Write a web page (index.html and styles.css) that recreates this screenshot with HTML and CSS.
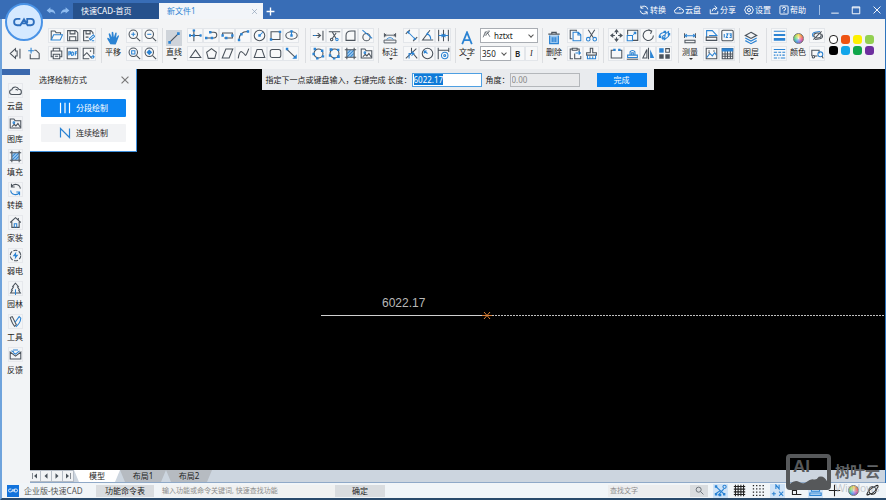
FILE: index.html
```
<!DOCTYPE html>
<html lang="zh-CN">

<head>
    <meta charset="UTF-8">
    <meta name="viewport" content="width=device-width, initial-scale=1.0">
    <title>快速CAD</title>
    <link rel="stylesheet" href="styles.css">
</head>

<body>
    <!-- icon set, .b = accent stroke, .bf = blue fill, .df = dark fill -->
    <svg class="sprite" aria-hidden="true">
        <symbol id="i-cad" viewBox="0 0 24 10"><path class="logo" d="M8 1.500H4.500Q1.200 1.500 1.200 5T4.500 8.500H8L12 2L16 8.500H19.500Q22.800 8.500 22.800 5T19.500 1.500H15.500V6M9.500 6.500H14"/></symbol>
        <symbol id="i-undo" viewBox="0 0 16 16"><path class="wf" d="M1 7L7 2V5Q14 5 15 13Q12 9 7 9.500V12Z"/></symbol>
        <symbol id="i-redo" viewBox="0 0 16 16"><path class="wf" d="M15 7L9 2V5Q2 5 1 13Q4 9 9 9.500V12Z"/></symbol>
        <symbol id="i-sync" viewBox="0 0 16 16"><path d="M14 7A6 6 0 0 0 3 4.500M3 1V5H7"/><path class="b" d="M2 9A6 6 0 0 0 13 11.500M13 15V11H9"/></symbol>
        <symbol id="i-cloud" viewBox="0 0 16 16"><path d="M4 13A3 3 0 0 1 3.500 7A4.500 4.500 0 0 1 12 6.500A3.200 3.200 0 0 1 12 13Z"/><path d="M8 7Q10 6 10.500 8"/></symbol>
        <symbol id="i-share" viewBox="0 0 16 16"><path d="M2 7V14H14V10M5 10Q5 5 11 5M9 1.500L13 5L9 8.500"/></symbol>
        <symbol id="i-gear" viewBox="0 0 16 16"><path d="M8 1L10 2.500H12.500L13.500 5L15 8L13.500 11L12.500 13.500H10L8 15L6 13.500H3.500L2.500 11L1 8L2.500 5L3.500 2.500H6Z"/><circle cx="8" cy="8" r="2.500"/></symbol>
        <symbol id="i-help" viewBox="0 0 16 16"><rect x="1.500" y="1.500" width="13" height="13" rx="1"/><path d="M5.500 6A2.500 2.500 0 1 1 8 8.500V10M8 11.500V13"/></symbol>
        <symbol id="i-min" viewBox="0 0 16 16"><path d="M2 13H14"/></symbol>
        <symbol id="i-max" viewBox="0 0 16 16"><path d="M2 3H14V14H2ZM2 4.500H14"/></symbol>
        <symbol id="i-x" viewBox="0 0 16 16"><path d="M2.500 2.500L13.500 13.500M13.500 2.500L2.500 13.500"/></symbol>
        <symbol id="i-plus" viewBox="0 0 16 16"><path d="M8 1V15M1 8H15"/></symbol>

        <symbol id="i-back" viewBox="0 0 16 16"><path d="M8 2L1.500 8L8 14V11H10V5H8ZM13.500 2V14"/></symbol>
        <symbol id="i-newfile" viewBox="0 0 16 16"><path d="M9 4H11L15 8V14.500H4V9"/><path class="b" d="M5 1V8M1.500 4.500H8.500"/></symbol>
        <symbol id="i-open" viewBox="0 0 16 16"><path d="M1.500 13.500V2.500H6L7.500 4.500H13V7"/><path class="b" d="M1.500 13.500L4.500 7H15.500L12.500 13.500Z"/></symbol>
        <symbol id="i-save" viewBox="0 0 16 16"><path d="M2 2H12L14.500 4.500V14.500H2ZM5 2V6H11V2M4.500 14V9.500H12V14"/></symbol>
        <symbol id="i-saveas" viewBox="0 0 16 16"><path d="M9 14.500H2V2H11L13.500 4.500V6M5 2V6H10V2M4.500 10H8"/><path class="b" d="M9 12L14 7L15.500 9L10.500 13.500ZM12 14.500H15"/></symbol>
        <symbol id="i-print" viewBox="0 0 16 16"><path d="M4 5V1.500H12V5M4 12H1.500V5H14.500V12H12M4 9H12V14.500H4ZM6 11.500H10"/></symbol>
        <symbol id="i-pdf" viewBox="0 0 16 16"><rect x="1.500" y="1.500" width="13" height="13"/><path class="b" d="M3.500 10.500V6H5.500V8.500H3.500M7 6V10.500Q9.500 10.500 9.500 8.200T7 6M11.500 10.500V6H13.500M11.500 8H13"/></symbol>
        <symbol id="i-image" viewBox="0 0 16 16"><path d="M9 14.500H1.500V1.500H14.500V9M2 11L6 7L12 14"/><circle class="df" cx="10.500" cy="5" r="1"/><path class="b" d="M10 12H15M13 10L15 12L13 14.500"/></symbol>
        <symbol id="i-hand" viewBox="0 0 16 16"><path class="bf" d="M5 15L1.500 9Q1 7 3 8L4.500 9.500L3 3.500Q3.500 2 4.700 3.200L6.500 7L6.500 1.500Q7.500 0 8.300 1.500L9 7L10.700 2Q12 1 12.200 2.500L11.500 8L13.700 5Q15 4.500 14.800 6L12 13L11 15.500Z"/></symbol>
        <symbol id="i-zoomin" viewBox="0 0 16 16"><circle cx="6.500" cy="6.500" r="5.200"/><path d="M10.500 10.500L15 15"/><path class="b" d="M4 6.500H9M6.500 4V9"/></symbol>
        <symbol id="i-zoomout" viewBox="0 0 16 16"><circle cx="6.500" cy="6.500" r="5.200"/><path d="M10.500 10.500L15 15"/><path class="b" d="M4 6.500H9"/></symbol>
        <symbol id="i-zoomwin" viewBox="0 0 16 16"><circle cx="6.500" cy="6.500" r="5.200"/><path d="M10.500 10.500L15 15"/><path class="b" d="M4.500 4.500H8.500V8.500H4.500Z"/></symbol>
        <symbol id="i-zoomall" viewBox="0 0 16 16"><circle cx="6.500" cy="6.500" r="5.200"/><path d="M10.500 10.500L15 15"/><path class="bf" d="M6.500 3L10 6.500L6.500 10L3 6.500Z"/></symbol>

        <symbol id="i-line" viewBox="0 0 16 16"><path d="M3.500 12.500L12.500 3.500"/><path class="bf" d="M1.500 11.500H4.500V14.500H1.500ZM11.500 1.500H14.500V4.500H11.500Z"/></symbol>
        <symbol id="i-axis" viewBox="0 0 16 16"><path d="M6 1V15M1 8H15"/><path class="bf" d="M4.500 6.500H7.500V9.500H4.500ZM0 6.500H2.500V9.500H0ZM13 6.500H15.500V9.500H13ZM4.500 0.500H7.500V3H4.500Z"/></symbol>
        <symbol id="i-polyline" viewBox="0 0 16 16"><path d="M2 11H8M6 4H11A3.500 3.500 0 0 1 11 11H9"/><path class="bf" d="M0 9.500H3V12.500H0ZM7 9.500H10V12.500H7ZM5 2.500H8V5.500H5Z"/></symbol>
        <symbol id="i-slot" viewBox="0 0 16 16"><path d="M2 8V5H14V11H4"/><path class="bf" d="M0.500 6.500H3.500V9.500H0.500ZM12.500 6.500H15.500V9.500H12.500ZM5 9.500H8V12.500H5Z"/></symbol>
        <symbol id="i-arc" viewBox="0 0 16 16"><path d="M2.500 13Q3 3 13 3"/><path class="bf" d="M1 12H4V15H1ZM4 5H7V8H4ZM12 1.500H15V4.500H12Z"/></symbol>
        <symbol id="i-circle" viewBox="0 0 16 16"><circle cx="8" cy="8" r="6.500"/><path class="b" d="M8 8L12 4"/><path class="bf" d="M6.500 6.500H9.500V9.500H6.500Z"/></symbol>
        <symbol id="i-rect" viewBox="0 0 16 16"><path d="M2.500 3.500H13.500V13H2.500Z"/><path class="bf" d="M1 11.500H4V14.500H1ZM12 2H15V5H12Z"/></symbol>
        <symbol id="i-ellipse" viewBox="0 0 16 16"><ellipse cx="8" cy="8" rx="7" ry="4.500"/><path class="b" d="M8 8V2"/><path class="bf" d="M6.500 6.500H9.500V9.500H6.500ZM6.500 1.500H9.500V4H6.500Z"/></symbol>
        <symbol id="i-tri" viewBox="0 0 16 16"><path d="M8 3.500L14.500 13H1.500Z"/></symbol>
        <symbol id="i-penta" viewBox="0 0 16 16"><path d="M8 2L14 6.500L12 14H4L2 6.500Z"/></symbol>
        <symbol id="i-para" viewBox="0 0 16 16"><path d="M6 2.500H14.500L10 13.500H1.500Z"/></symbol>
        <symbol id="i-spline" viewBox="0 0 16 16"><path d="M1.500 14Q3 4 6 6T10 10T14.500 2"/></symbol>
        <symbol id="i-trap" viewBox="0 0 16 16"><path d="M5 3H11L14.500 13H1.500Z"/></symbol>
        <symbol id="i-rrect" viewBox="0 0 16 16"><rect x="1.500" y="3" width="13" height="10" rx="2.500"/></symbol>
        <symbol id="i-ray" viewBox="0 0 16 16"><path d="M2 2.500L13 13"/><path class="bf" d="M14.500 14.500V9L9 14.500ZM1 1H4V4H1Z"/></symbol>

        <symbol id="i-extend" viewBox="0 0 16 16"><path d="M1 8H10M7 5L10.500 8L7 11M13.500 2V14"/><path class="b" d="M2 8H5"/></symbol>
        <symbol id="i-trim" viewBox="0 0 16 16"><path d="M1 3.500H15M5 3L10 12M10 5L5 12"/><circle cx="4.500" cy="13" r="1.500"/><circle class="b" cx="11" cy="13" r="1.500"/></symbol>
        <symbol id="i-fillet" viewBox="0 0 16 16"><path d="M2.500 14V8Q2.500 2.500 9 2.500H13.500V14Z"/></symbol>
        <symbol id="i-tangent" viewBox="0 0 16 16"><circle cx="8" cy="10" r="4.500"/><path class="b" d="M3 1.500L15 11.500"/></symbol>
        <symbol id="i-node" viewBox="0 0 16 16"><circle cx="8" cy="8" r="5.500"/><path class="bf" d="M2 1H5V4H2ZM11 3H14V6H11ZM0.500 7H3.500V10H0.500ZM12 10H15V13H12ZM5 12.500H8V15.500H5Z"/></symbol>
        <symbol id="i-break" viewBox="0 0 16 16"><circle cx="8" cy="8" r="5.500"/><path class="bf" d="M2 1.500H5.500V5H2ZM11 2H14V5H11ZM1 9H4V12H1ZM11 10H14.500V13.500H11ZM6 13H9V15.500H6Z"/></symbol>
        <symbol id="i-hatch" viewBox="0 0 16 16"><path class="bl" d="M3.500 3.500H12.500V12.500H3.500Z"/><path class="b" d="M4 8L8 4M4 12L12 4M8 12L12 8"/><path d="M1 3.500H15M1 12.500H15M3.500 1V15M12.500 1V15"/></symbol>
        <symbol id="i-gallery" viewBox="0 0 16 16"><path d="M1.500 13.500V2.500H6L7.500 4.500H14.500V13.500ZM3.500 12L6.500 9L8.500 11L11 8L13.500 12"/><circle class="b" cx="6" cy="7" r="1"/></symbol>

        <symbol id="i-mark" viewBox="0 0 20 16"><path d="M2 1V7M18 1V7M2 4H18M4.500 2.500L2 4L4.500 5.500M15.500 2.500L18 4L15.500 5.500M1.500 11H18.500V15H1.500Z"/><path class="b" d="M5 10Q10 5 15 10"/></symbol>
        <symbol id="i-aligned" viewBox="0 0 16 16"><path class="b" d="M4 4L12 12"/><path d="M6 1L1 6M15 10L10 15"/><path class="bf" d="M2 3L6 2.500L4.500 6ZM14 13L10 13.500L12 10Z"/></symbol>
        <symbol id="i-angle" viewBox="0 0 16 16"><path d="M11 1.500L2 13.500H15"/><path class="b" d="M7 6Q12 7 12 13M9 4L7 6.500L10 7.500"/></symbol>
        <symbol id="i-linear" viewBox="0 0 16 16"><path d="M2 1V15M8 1V15M14 1V15"/><path class="b" d="M2 8H14M5.500 6L8 8L5.500 10M10.500 6L8 8L10.500 10"/></symbol>
        <symbol id="i-coord" viewBox="0 0 16 16"><path d="M1 14L14 2M8 1V8M10 8L15 14"/><path class="b" d="M5 14V8H11M8 5.500L11 8L8 10.500"/></symbol>
        <symbol id="i-radius" viewBox="0 0 16 16"><circle cx="8" cy="8" r="6.500"/><path class="b" d="M8 8L4 5M4 8V5H7"/></symbol>
        <symbol id="i-dimset" viewBox="0 0 16 16"><path d="M1.500 1V15M14.500 1V6M2 4H14"/><circle class="b" cx="9.500" cy="10.500" r="4"/><circle class="b" cx="9.500" cy="10.500" r="1.200"/></symbol>
        <symbol id="i-text" viewBox="0 0 16 16"><path class="b thick" d="M2.500 15L8 1.500L13.500 15M4.500 10.500H11.500"/></symbol>
        <symbol id="i-font" viewBox="0 0 16 16"><path d="M2 13L6 3L8 8M4 9H8M8 2L14 12M8 8L13 3M10 2H14"/></symbol>
        <symbol id="i-trash" viewBox="0 0 16 16"><path d="M1.500 3.500H14.500M5.500 3.500V1.500H10.500V3.500"/><path class="bl" d="M3 5H13V14.500H3Z"/><path class="b" d="M3 5V14.500H13V5M6 7V12.500M8 7V12.500M10 7V12.500"/></symbol>
        <symbol id="i-copy" viewBox="0 0 16 16"><path d="M4 12H1.500V1.500H9V3"/><path class="b" d="M5 4H11.500L14.500 7V14.500H5ZM11 4V7.500H14.500"/></symbol>
        <symbol id="i-cut" viewBox="0 0 16 16"><path d="M4 1L10.500 11M12 1L5.500 11"/><circle class="b" cx="4" cy="12.500" r="2.200"/><circle class="b" cx="12" cy="12.500" r="2.200"/></symbol>
        <symbol id="i-paste" viewBox="0 0 16 16"><path d="M5 14.500H1.500V2.500H4M10 2.500H12.500V6M4 1.500H10V4H4ZM7 8V14.500H14.500V11"/><path class="b" d="M8 7.500H14M12 5.500L14 7.500L12 9.500"/></symbol>
        <symbol id="i-brush" viewBox="0 0 16 16"><path d="M6.500 7V1.500H9.500V7H14V10H2V7Z"/><path class="b" d="M3 10V14.500H13V10M6 14V11.500M9.500 14V11.500"/></symbol>

        <symbol id="i-move" viewBox="0 0 16 16"><path d="M8 2V6M8 10V14M2 8H6M10 8H14"/><path class="df" d="M8 0L11 4H5ZM8 16L11 12H5ZM0 8L4 5V11ZM16 8L12 5V11Z"/></symbol>
        <symbol id="i-scale" viewBox="0 0 16 16"><path d="M2 7V1.500H14.500V14H8"/><path class="b" d="M1.500 8H8V14.500H1.500ZM9 7L12 4M9.500 4H12V6.500"/></symbol>
        <symbol id="i-rotate" viewBox="0 0 16 16"><path d="M11 2.500A6.300 6.300 0 1 0 14 8M8 1L12 2.500L10.500 6"/></symbol>
        <symbol id="i-offset" viewBox="0 0 16 16"><path class="b" d="M1.500 10Q2 5 6 4.500L9 3M5 12Q5 8 9 7M8 13L13 9V3L9 6Z"/><path class="bf" d="M1 8H4V11H1ZM7 2H10V5H7ZM12 5H15V8H12ZM5 10H8V13H5Z"/></symbol>
        <symbol id="i-stretch" viewBox="0 0 16 16"><path d="M5 4H1.500V13.500H14.500V4H11"/><path class="bf" d="M4 2H7V5H4ZM10 2H13V5H10Z"/></symbol>
        <symbol id="i-stamp" viewBox="0 0 16 16"><path class="b" d="M5 10V6A3.500 3.500 0 0 1 11 6V10M2 10H14V13H2ZM7 10V7H9V10"/><path d="M1 15H15"/></symbol>
        <symbol id="i-mirror" viewBox="0 0 16 16"><path d="M6 3V13.500H1ZM8 1V15"/><path class="bf" d="M10 3V13.500H15Z"/></symbol>
        <symbol id="i-array" viewBox="0 0 16 16"><path d="M9.500 2H14V6.500H9.500Z"/><path class="bf" d="M1.500 1.500H7V7H1.500Z"/><path class="df" d="M1.500 9H7V14.500H1.500ZM9 9H14.500V14.500H9Z"/></symbol>
        <symbol id="i-measure" viewBox="0 0 18 16"><path d="M2 2V8M16 2V8M2.500 11H15.500V14H2.500Z"/><path class="b" d="M2 5H16M5 3L2.500 5L5 7M13 3L15.500 5L13 7"/></symbol>
        <symbol id="i-area" viewBox="0 0 16 16"><path class="b" d="M2 10V2H9L14.500 8H5"/><path d="M1.500 10H14.500V14H1.500Z"/></symbol>
        <symbol id="i-num" viewBox="0 0 16 16"><rect x="1" y="1.500" width="14" height="13" rx="1.500"/><path class="b" d="M4 6V10.500M6.500 6H8.500L6.500 10.500H8.700M10.500 6H12.500V10.500H10.500M11 8H12.500"/></symbol>
        <symbol id="i-region" viewBox="0 0 16 16"><path d="M1.500 1.500H14.500V14.500H1.500ZM4 5H6M10 5H12"/><path class="b" d="M2 13L6 8L9 11L12 7L14 10"/><circle class="df" cx="5" cy="7" r="1"/></symbol>
        <symbol id="i-table" viewBox="0 0 16 16"><path d="M1.500 2H14.500V14.500H1.500ZM1.500 8.500H14.500M1.500 11.500H14.500M5 5V14.500M8 5V14.500M11.500 5V14.500"/><path class="bf" d="M1 1.500H15V5.500H1Z"/></symbol>
        <symbol id="i-layers" viewBox="0 0 16 16"><path d="M8 1.500L14.500 5L8 8.500L1.500 5Z"/><path class="b" d="M1.500 8L8 11.500L14.500 8M1.500 11L8 14.500L14.500 11"/></symbol>
        <symbol id="i-weight" viewBox="0 0 16 16"><path class="bf" d="M1 2H15V3.500H1ZM1 6H15V8.500H1ZM1 11H15V14.500H1Z"/></symbol>
        <symbol id="i-dash" viewBox="0 0 16 16"><path class="b" d="M1 3H15M1 6.500H5M6.500 6.500H10M11.500 6.500H15M1 10H3M4.500 10H6.500M8 10H10M11.500 10H14.500M1 13.500H5M6.500 13.500H8M9.500 13.500H15"/></symbol>
        <symbol id="i-link" viewBox="0 0 16 16"><path class="b" d="M3 10Q0 5 5 4L11 3"/><path d="M13 6Q16 11 11 12L5 13M3 13L13 3"/><ellipse cx="8" cy="8" rx="4.500" ry="3"/></symbol>
        <symbol id="i-match" viewBox="0 0 16 16"><path d="M1 11V4H10V8M4 11H8"/><circle class="b" cx="11.500" cy="9" r="3"/><path d="M13.500 11L15 14"/><circle cx="3" cy="12" r="1.500"/></symbol>

        <symbol id="i-home" viewBox="0 0 16 16"><path d="M1.500 8L8 2L14.500 8M3.500 7V14H12.500V7M11.500 4.500V2.500"/><path class="b" d="M6.500 14V9.500H9.500V14"/></symbol>
        <symbol id="i-power" viewBox="0 0 16 16"><circle cx="8" cy="8" r="6.500" stroke-dasharray="5 1.800"/><path class="bf" d="M9 3L4.500 9H7.500L7 13L11.500 7H8.500Z"/></symbol>
        <symbol id="i-tree" viewBox="0 0 16 16"><path d="M8 1.500L4.500 5.500L5.500 6L3 10L4 10.500L2 13.500H14L12 10.500L13 10L10.500 6L11.500 5.500Z"/><path class="b" d="M8 9V16"/></symbol>
        <symbol id="i-tools" viewBox="0 0 16 16"><path d="M1.500 3L4 2L9 12L7 14Q4 11 1.500 3Z"/><path class="b" d="M7.500 9L12.500 2L14.500 4Q14 10 8.500 14.500"/></symbol>
        <symbol id="i-mail" viewBox="0 0 16 16"><path d="M1.500 5V13.500H14.500V5L8 10Z"/><path class="b" d="M3 3.500L6 5M5 2.500H11M13 3.500L8 7.500L5 5.500"/></symbol>
        <symbol id="i-bars" viewBox="0 0 16 16"><path d="M2 1V15M8 1V15M14 1V15"/></symbol>
        <symbol id="i-zig" viewBox="0 0 16 16"><path d="M2 14V2L14 14V2"/></symbol>
        <symbol id="i-search" viewBox="0 0 16 16"><circle cx="6.500" cy="6.500" r="4.500"/><path d="M10 10L15 15"/></symbol>
        <symbol id="i-first" viewBox="0 0 16 16"><path d="M3 2V14"/><path class="df" d="M12 3V13L6 8Z"/></symbol>
        <symbol id="i-prev" viewBox="0 0 16 16"><path class="df" d="M11 2.500V13.500L5 8Z"/></symbol>
        <symbol id="i-next" viewBox="0 0 16 16"><path class="df" d="M5 2.500V13.500L11 8Z"/></symbol>
        <symbol id="i-last" viewBox="0 0 16 16"><path d="M13 2V14"/><path class="df" d="M4 3V13L10 8Z"/></symbol>
        <symbol id="i-snap" viewBox="0 0 16 16"><path class="b" d="M2 3L12 12M2 12L8 8M5 14L12 6"/><circle class="b" cx="13" cy="3.500" r="2"/><path class="bf" d="M1 1.500H4V4.500H1ZM1 11H4V14H1ZM6 12H9V15H6ZM11 11H14V14H11Z"/></symbol>
        <symbol id="i-grid" viewBox="0 0 16 16"><path class="k" d="M3 1V15M6.300 1V15M9.700 1V15M13 1V15M1 3H15M1 6.300H15M1 9.700H15M1 13H15"/></symbol>
        <symbol id="i-dots" viewBox="0 0 16 16"><path class="k" stroke-dasharray="1.600 2.400" d="M1 2H15M1 6H15M1 10H15M1 14H15"/></symbol>
        <symbol id="i-osnap" viewBox="0 0 16 16"><path class="b" d="M6 6V1L10 6V1M1 12H6M3.500 9.500V14.500M10 9.500L15 14.500M15 9.500L10 14.500"/></symbol>
        <symbol id="i-ortho" viewBox="0 0 16 16"><path class="k" d="M3 2V13H14M3 8H8V13"/></symbol>
        <symbol id="i-screen" viewBox="0 0 16 16"><path class="b" d="M3 2H13V9H3ZM1 11H15V14H1Z"/></symbol>
        <symbol id="i-orbit" viewBox="0 0 16 16"><circle class="k" cx="8" cy="8" r="4.500"/><path class="k" d="M5 12Q0 15 1.500 11.500Q4 6 11 3Q16 0 14.500 4Q12 9 6 13"/></symbol>
    </svg>

    <header class="titlebar">
        <div class="history">
            <button class="plain" aria-label="撤销"><svg><use href="#i-undo"/></svg></button>
            <button class="plain" aria-label="重做"><svg><use href="#i-redo"/></svg></button>
        </div>
        <div class="file-tab">快速CAD-首页</div>
        <div class="file-tab active">新文件1<button class="plain tab-close" aria-label="关闭"><svg><use href="#i-x"/></svg></button></div>
        <button class="plain add-tab" aria-label="新建"><svg><use href="#i-plus"/></svg></button>
        <div class="title-tools">
            <button class="plain"><svg><use href="#i-sync"/></svg>转换</button>
            <button class="plain"><svg><use href="#i-cloud"/></svg>云盘</button>
            <button class="plain"><svg><use href="#i-share"/></svg>分享</button>
            <button class="plain"><svg><use href="#i-gear"/></svg>设置</button>
            <button class="plain"><svg><use href="#i-help"/></svg>帮助</button>
        </div>
        <div class="window-tools">
            <button class="plain" aria-label="最小化"><svg><use href="#i-min"/></svg></button>
            <button class="plain" aria-label="最大化"><svg><use href="#i-max"/></svg></button>
            <button class="plain" aria-label="关闭窗口"><svg><use href="#i-x"/></svg></button>
        </div>
        <div class="app-logo"><svg><use href="#i-cad"/></svg></div>
    </header>

    <div class="ribbon">
        <div class="quick">
            <button class="plain"><svg><use href="#i-back"/></svg></button>
            <button class="plain"><svg><use href="#i-newfile"/></svg></button>
        </div>
        <div class="group first">
            <div class="cells">
                <button class="cell"><svg><use href="#i-open"/></svg></button>
                <button class="cell"><svg><use href="#i-save"/></svg></button>
                <button class="cell"><svg><use href="#i-saveas"/></svg></button>
                <button class="cell"><svg><use href="#i-print"/></svg></button>
                <button class="cell"><svg><use href="#i-pdf"/></svg></button>
                <button class="cell"><svg><use href="#i-image"/></svg></button>
            </div>
        </div>
        <div class="group">
            <button class="big"><svg><use href="#i-hand"/></svg>平移</button>
            <div class="cells">
                <button class="cell"><svg><use href="#i-zoomin"/></svg></button>
                <button class="cell"><svg><use href="#i-zoomout"/></svg></button>
                <button class="cell"><svg><use href="#i-zoomwin"/></svg></button>
                <button class="cell"><svg><use href="#i-zoomall"/></svg></button>
            </div>
        </div>
        <div class="group wide">
            <button class="big menu on"><svg><use href="#i-line"/></svg>直线</button>
            <div class="cells">
                <button class="cell"><svg><use href="#i-axis"/></svg></button>
                <button class="cell"><svg><use href="#i-polyline"/></svg></button>
                <button class="cell"><svg><use href="#i-slot"/></svg></button>
                <button class="cell"><svg><use href="#i-arc"/></svg></button>
                <button class="cell"><svg><use href="#i-circle"/></svg></button>
                <button class="cell"><svg><use href="#i-rect"/></svg></button>
                <button class="cell"><svg><use href="#i-ellipse"/></svg></button>
                <button class="cell"><svg><use href="#i-tri"/></svg></button>
                <button class="cell"><svg><use href="#i-penta"/></svg></button>
                <button class="cell"><svg><use href="#i-para"/></svg></button>
                <button class="cell"><svg><use href="#i-spline"/></svg></button>
                <button class="cell"><svg><use href="#i-trap"/></svg></button>
                <button class="cell"><svg><use href="#i-rrect"/></svg></button>
                <button class="cell"><svg><use href="#i-ray"/></svg></button>
            </div>
        </div>
        <div class="group indent">
            <div class="cells">
                <button class="cell"><svg><use href="#i-extend"/></svg></button>
                <button class="cell"><svg><use href="#i-trim"/></svg></button>
                <button class="cell"><svg><use href="#i-fillet"/></svg></button>
                <button class="cell"><svg><use href="#i-tangent"/></svg></button>
                <button class="cell"><svg><use href="#i-node"/></svg></button>
                <button class="cell"><svg><use href="#i-break"/></svg></button>
                <button class="cell"><svg><use href="#i-hatch"/></svg></button>
                <button class="cell"><svg><use href="#i-gallery"/></svg></button>
            </div>
        </div>
        <div class="group">
            <button class="big menu"><svg><use href="#i-mark"/></svg>标注</button>
            <div class="cells">
                <button class="cell"><svg><use href="#i-aligned"/></svg></button>
                <button class="cell"><svg><use href="#i-angle"/></svg></button>
                <button class="cell"><svg><use href="#i-linear"/></svg></button>
                <button class="cell"><svg><use href="#i-coord"/></svg></button>
                <button class="cell"><svg><use href="#i-radius"/></svg></button>
                <button class="cell"><svg><use href="#i-dimset"/></svg></button>
            </div>
        </div>
        <div class="group">
            <button class="big menu"><svg><use href="#i-text"/></svg>文字</button>
            <div class="fonts">
                <div class="pick pick-font">
                    <svg><use href="#i-font"/></svg>
                    <select aria-label="字体"><option>hztxt</option></select>
                </div>
                <div class="font-row">
                    <div class="pick pick-size"><select aria-label="字号"><option>350</option></select></div>
                    <button class="cell bold">B</button>
                    <button class="cell italic">I</button>
                </div>
            </div>
        </div>
        <div class="group">
            <button class="big menu"><svg><use href="#i-trash"/></svg>删除</button>
            <div class="cells">
                <button class="cell"><svg><use href="#i-copy"/></svg></button>
                <button class="cell"><svg><use href="#i-cut"/></svg></button>
                <button class="cell"><svg><use href="#i-paste"/></svg></button>
                <button class="cell"><svg><use href="#i-brush"/></svg></button>
            </div>
        </div>
        <div class="group indent wide">
            <div class="cells">
                <button class="cell"><svg><use href="#i-move"/></svg></button>
                <button class="cell"><svg><use href="#i-scale"/></svg></button>
                <button class="cell"><svg><use href="#i-rotate"/></svg></button>
                <button class="cell"><svg><use href="#i-offset"/></svg></button>
                <button class="cell"><svg><use href="#i-stretch"/></svg></button>
                <button class="cell"><svg><use href="#i-stamp"/></svg></button>
                <button class="cell"><svg><use href="#i-mirror"/></svg></button>
                <button class="cell"><svg><use href="#i-array"/></svg></button>
            </div>
        </div>
        <div class="group">
            <button class="big menu"><svg><use href="#i-measure"/></svg>测量</button>
            <div class="cells">
                <button class="cell"><svg><use href="#i-area"/></svg></button>
                <button class="cell"><svg><use href="#i-num"/></svg></button>
                <button class="cell"><svg><use href="#i-region"/></svg></button>
                <button class="cell"><svg><use href="#i-table"/></svg></button>
            </div>
        </div>
        <div class="group">
            <button class="big menu"><svg><use href="#i-layers"/></svg>图层</button>
        </div>
        <div class="group indent last">
            <div class="cells">
                <button class="cell"><svg><use href="#i-weight"/></svg></button>
                <button class="cell"><svg><use href="#i-dash"/></svg></button>
            </div>
            <button class="big"><span class="wheel"></span>颜色</button>
            <div class="cells">
                <button class="cell"><svg><use href="#i-link"/></svg></button>
                <button class="cell"><svg><use href="#i-match"/></svg></button>
            </div>
            <div class="swatches">
                <button class="swatch white" aria-label="白色"></button>
                <button class="swatch orange" aria-label="橙色"></button>
                <button class="swatch yellow" aria-label="黄色"></button>
                <button class="swatch lime" aria-label="浅绿"></button>
                <button class="swatch black" aria-label="黑色"></button>
                <button class="swatch cyan" aria-label="青色"></button>
                <button class="swatch green" aria-label="绿色"></button>
                <button class="swatch purple" aria-label="紫色"></button>
            </div>
        </div>
    </div>

    <div class="main">
        <nav class="sidebar">
            <button class="side"><svg><use href="#i-cloud"/></svg>云盘</button>
            <button class="side"><svg><use href="#i-gallery"/></svg>图库</button>
            <button class="side"><svg><use href="#i-hatch"/></svg>填充</button>
            <button class="side"><svg><use href="#i-sync"/></svg>转换</button>
            <button class="side"><svg><use href="#i-home"/></svg>家装</button>
            <button class="side"><svg><use href="#i-power"/></svg>弱电</button>
            <button class="side"><svg><use href="#i-tree"/></svg>园林</button>
            <button class="side"><svg><use href="#i-tools"/></svg>工具</button>
            <button class="side"><svg><use href="#i-mail"/></svg>反馈</button>
        </nav>

        <div class="work">
            <div class="canvas">
                <svg class="drawing">
                    <text class="dim" x="352" y="238">6022.17</text>
                    <path class="solid" d="M291 246.500H457"/>
                    <line class="dashed" x1="459" y1="246.500" x2="100%" y2="246.500"/>
                    <path class="cross" d="M454 243L460 250M460 243L454 250M452 246.500H462"/>
                </svg>

                <div class="mode">
                    <div class="mode-head">选择绘制方式<button class="plain" aria-label="关闭"><svg><use href="#i-x"/></svg></button></div>
                    <div class="mode-body">
                        <button class="mode-btn primary"><svg><use href="#i-bars"/></svg>分段绘制</button>
                        <button class="mode-btn"><svg><use href="#i-zig"/></svg>连续绘制</button>
                    </div>
                </div>

                <div class="prompt">
                    <span>指定下一点或键盘输入，右键完成</span>
                    <label for="len">长度：</label>
                    <input id="len" type="text" value="6022.17">
                    <label for="ang">角度：</label>
                    <input id="ang" type="text" value="0.00" disabled>
                    <button class="done">完成</button>
                </div>
            </div>

            <div class="sheets">
                <div class="pager">
                    <button><svg><use href="#i-first"/></svg></button>
                    <button><svg><use href="#i-prev"/></svg></button>
                    <button><svg><use href="#i-next"/></svg></button>
                    <button><svg><use href="#i-last"/></svg></button>
                </div>
                <button class="sheet current">模型</button>
                <button class="sheet">布局1</button>
                <button class="sheet">布局2</button>
            </div>
        </div>
    </div>

    <footer class="status">
        <span class="mini-logo"><svg><use href="#i-cad"/></svg></span>
        <span class="edition">企业版-快速CAD</span>
        <button class="gray commands">功能命令表</button>
        <input class="command" type="text" aria-label="命令" placeholder="输入功能或命令关键词, 快速查找功能">
        <button class="gray ok">确定</button>
        <input class="find" type="text" aria-label="查找文字" placeholder="查找文字">
        <button class="gray find-btn" aria-label="查找"><svg><use href="#i-search"/></svg></button>
        <div class="toggles">
            <button class="plain on"><svg><use href="#i-snap"/></svg></button>
            <button class="plain"><svg><use href="#i-grid"/></svg></button>
            <button class="plain"><svg><use href="#i-dots"/></svg></button>
            <button class="plain on"><svg><use href="#i-osnap"/></svg></button>
            <button class="plain"><svg><use href="#i-ortho"/></svg></button>
            <button class="plain on"><svg><use href="#i-screen"/></svg></button>
            <button class="plain dark"><svg><use href="#i-plus"/></svg></button>
            <button class="plain"><span class="wheel"></span></button>
            <button class="plain"><svg><use href="#i-orbit"/></svg></button>
        </div>
    </footer>

    <div class="watermark">
        <div class="wm-box">
            <span>AI</span>
            <svg viewBox="0 0 36 14" preserveAspectRatio="none"><path d="M0 14V9Q5 4 9 7T16 7Q20 3 23 4T28 1Q33 -1 36 6V14Z"/></svg>
        </div>
        <div class="wm-text">
            <div class="wm-name">树叶云</div>
            <div class="wm-win">Windows</div>
        </div>
    </div>

    <script>
        // start with the length selected so it can be typed over
        const len = document.getElementById('len')
        len.focus()
        len.select()
    </script>
</body>

</html>
```
FILE: styles.css
```
* {
    padding: 0;
    margin: 0;
    box-sizing: border-box;
}

body {
    height: 100vh;
    display: flex;
    flex-direction: column;
    overflow: hidden;
    font-family: "Noto Sans", "Noto Sans CJK SC", sans-serif;
    font-size: 8px;
    line-height: 12px;
    color: #222;
    background: #f2f3f4;
}

button,
input,
select {
    font: inherit;
    color: inherit;
    border: 0;
    background: none;
}

button {
    display: flex;
    align-items: center;
    justify-content: center;
    white-space: nowrap;
}

svg {
    display: block;
    flex: none;
    width: 13px;
    height: 13px;
    fill: none;
    stroke: #4b535c;
    stroke-width: 1.3;
}

.sprite {
    position: absolute;
    width: 0;
    height: 0;
}

.b {
    stroke: var(--accent, #2b83d3);
}

.thick {
    stroke-width: 2;
}

.bf {
    fill: #2b83d3;
    stroke: none;
}

.bl {
    fill: #9cc8f0;
    stroke: none;
}

.df {
    fill: #4b535c;
    stroke: none;
}

.wf {
    fill: #8fbcf0;
    stroke: none;
}

.k {
    stroke: #222;
}

.logo {
    stroke-width: 2;
}

/* title bar */
.titlebar {
    --accent: #fff;
    position: relative;
    height: 19px;
    display: flex;
    align-items: flex-end;
    padding-right: 4px;
    background: #386db6;
    color: #fff;
}

.titlebar svg {
    width: 10px;
    height: 10px;
    stroke: #fff;
    stroke-width: 1.5;
}

.history {
    display: flex;
    gap: 4px;
    height: 16px;
    width: 73px;
    padding-left: 46px;
}

.file-tab {
    height: 16px;
    width: 86px;
    padding: 0 5px 0 8px;
    display: flex;
    align-items: center;
    justify-content: space-between;
    background: #26518c;
}

.file-tab.active {
    width: 104px;
    background: #f2f5f9;
    color: #2b83d3;
}

.file-tab .tab-close svg {
    width: 7px;
    height: 7px;
    stroke: #8a9db5;
}

.add-tab {
    width: 14px;
    height: 16px;
}

.titlebar .add-tab svg {
    width: 9px;
    height: 9px;
    stroke-width: 2.4;
}

.title-tools {
    display: flex;
    align-self: center;
    gap: 8px;
    margin-left: auto;
    padding-right: 13px;
}

.title-tools button {
    gap: 1px;
}

.window-tools {
    display: flex;
    align-self: center;
    gap: 11px;
    padding-left: 10px;
    border-left: 1px solid #9dbbe2;
}

.app-logo {
    position: absolute;
    z-index: 2;
    left: 5px;
    top: 3px;
    width: 38px;
    height: 38px;
    border: 2px solid #4a93e6;
    border-radius: 50%;
    background: #d5e9ff;
    display: flex;
    align-items: center;
    justify-content: center;
}

.titlebar .app-logo svg {
    width: 22px;
    height: 10px;
    stroke: #2f6fbd;
}

/* ribbon */
.ribbon {
    height: 50px;
    display: flex;
    padding: 9px 0 6px;
    border-left: 2px solid #6fa3dc;
    border-right: 1px solid #2f75bd;
    background: #f3f4f5;
}

.quick {
    display: flex;
    align-items: flex-start;
    gap: 5px;
    padding: 19px 8px 0 7px;
}

.group {
    display: flex;
    align-items: flex-start;
    gap: 2px;
    padding-right: 4px;
    border-right: 1px solid #dcdee1;
}

.group.first {
    padding-right: 5px;
}

.group.wide {
    padding-right: 6px;
}

.group.indent {
    padding-left: 4px;
}

.group.last {
    gap: 0;
    border: 0;
}

.cells {
    display: grid;
    grid-template-rows: 15px 15px;
    row-gap: 3px;
    grid-template-columns: repeat(3, 16px);
}

/* even two-row blocks */
.cells:has(> :nth-child(2):last-child) {
    grid-template-columns: 16px;
}

.cells:has(> :nth-child(4):last-child) {
    grid-template-columns: repeat(2, 16px);
}

.cells:has(> :nth-child(8):last-child) {
    grid-template-columns: repeat(4, 16px);
}

.cells:has(> :nth-child(14):last-child) {
    grid-template-columns: repeat(7, 16px);
}

.cell {
    border: 1px solid #e3e6ea;
    background: #f7f8f9;
}

.big {
    position: relative;
    flex-direction: column;
    width: 22px;
    height: 31px;
    justify-content: flex-start;
}

.big svg {
    width: 16px;
    height: 16px;
    padding: 1px;
    margin-top: 2px;
}

.big.on svg {
    background: #cfd4da;
}

/* small arrow below the label */
.menu::after {
    content: "";
    position: absolute;
    bottom: -1px;
    left: 10px;
    border: 2px solid transparent;
    border-top-color: #333;
    border-bottom: 0;
}

.wheel {
    flex: none;
    width: 11px;
    height: 11px;
    border: 1px solid #777;
    border-radius: 50%;
    background: radial-gradient(#ffffffb0, #ffffff00 70%), conic-gradient(#f7d850, #f08040, #e84880, #9060d0, #4090e0, #40c890, #a0d850, #f7d850);
}

.big .wheel {
    margin: 5px 0 2px;
}

.fonts {
    width: 58px;
    display: flex;
    flex-direction: column;
    gap: 3px;
}

.font-row {
    display: flex;
}

.pick {
    position: relative;
    height: 15px;
    border: 1px solid #a9adb3;
    background: #fff;
    display: flex;
    align-items: center;
}

.pick::after {
    content: "";
    position: absolute;
    right: 4px;
    top: 4px;
    width: 3px;
    height: 3px;
    border: solid #555;
    border-width: 0 1px 1px 0;
    transform: rotate(45deg);
}

.pick svg {
    width: 9px;
    height: 9px;
    margin: 0 2px 3px 1px;
}

.pick select {
    appearance: none;
    flex: 1;
    min-width: 0;
    outline: 0;
    padding-left: 1px;
}

.pick-size {
    width: 31px;
}

.font-row .cell {
    flex: 1;
}

.bold {
    font-weight: 600;
}

.italic {
    font-family: "Liberation Serif", serif;
    font-style: italic;
}

.swatches {
    display: grid;
    grid-template-columns: repeat(4, 9px);
    gap: 2px 3px;
    padding: 7px 0 0 4px;
}

.swatch {
    height: 9px;
    border-radius: 3px;
}

.white {
    background: #fff;
    border: 1px solid #222;
    border-radius: 4px;
}

.orange { background: #ee5313; }
.yellow { background: #fdf000; }
.lime { background: #92d050; }
.black { background: #000; }
.cyan { background: #12a5ea; }
.green { background: #0fa64a; }
.purple { background: #6d2f9e; }

/* main area */
.main {
    flex: 1;
    min-height: 0;
    display: flex;
    border-left: 2px solid #6fa3dc;
    border-right: 1px solid #2f75bd;
}

.sidebar {
    width: 28px;
    border-top: 6px solid #3b69ae;
    padding-top: 8px;
    display: flex;
    flex-direction: column;
    gap: 4px;
    align-items: center;
    padding-right: 2px;
    background: #f2f4f6;
}

.side {
    flex-direction: column;
    gap: 2px;
    height: 29px;
    flex: none;
}

.side svg {
    border: 1px solid #e6e8ec;
    width: 15px;
    height: 15px;
}

.work {
    flex: 1;
    min-width: 0;
    display: flex;
    flex-direction: column;
}

.canvas {
    position: relative;
    flex: 1;
    background: #000;
}

.drawing {
    width: 100%;
    height: 100%;
    stroke-width: 1;
}

.solid {
    stroke: #d0d0d0;
}

.dashed {
    stroke: #c0c0c0;
    stroke-dasharray: 2 1;
}

.cross {
    stroke: #d98038;
}

.dim {
    font-family: "Liberation Sans", Arial, sans-serif;
    font-size: 12px;
    fill: #b8b8b8;
    stroke: none;
}

.mode {
    position: absolute;
    left: 0;
    top: 0;
    width: 107px;
    border: 1px solid #3f8fdc;
    border-width: 0 1px 1px 0;
    background: #fff;
}

.mode-head {
    height: 21px;
    padding: 0 6px 0 9px;
    display: flex;
    align-items: center;
    justify-content: space-between;
    background: #f0f2f4;
}

.mode-head svg {
    width: 10px;
    height: 10px;
    stroke: #777;
    stroke-width: 1.8;
}

.mode-body {
    padding: 9px 10px 9px 11px;
    display: flex;
    flex-direction: column;
    gap: 7px;
}

.mode-btn {
    height: 18px;
    gap: 5px;
    border-radius: 1px;
    background: #f2f3f5;
}

.mode-btn svg {
    width: 12px;
    height: 12px;
    stroke: #2b83d3;
    stroke-width: 1.6;
}

.mode-btn.primary {
    background: #0a84f2;
    color: #fff;
}

.mode-btn.primary svg {
    stroke: #fff;
}

.prompt {
    position: absolute;
    top: 0;
    left: 50%;
    transform: translateX(-50%);
    height: 21px;
    padding: 0 7px 0 4px;
    display: flex;
    align-items: center;
    white-space: nowrap;
    background: #e9ebee;
}

.prompt label {
    padding-left: 2px;
}

.prompt input {
    width: 70px;
    height: 14px;
    margin-right: 2px;
    padding: 0 1px;
    border: 1px solid #4e9fe2;
    background: #fff;
    outline: 0;
}

.prompt input::selection {
    background: #0f7bd8;
    color: #fff;
}

.prompt input:disabled {
    border-color: #b4b7bb;
    background: #e9eaec;
    color: #888;
}

.done {
    width: 50px;
    height: 14px;
    margin-left: 15px;
    background: #0a84f2;
    color: #fff;
}

.sheets {
    height: 13px;
    display: flex;
    border-bottom: 1px solid #8fa9c8;
    background: #ccd5df;
}

.pager {
    display: flex;
}

.pager button {
    width: 11px;
    border: 1px solid #b5bcc5;
    border-left: 0;
    background: #f1f3f5;
}

.pager svg {
    width: 8px;
    height: 8px;
}

.sheet {
    width: 46px;
    background: #b6bbc1;
    clip-path: polygon(0 0, 100% 0, 41px 100%, 5px 100%);
}

.sheet.current {
    background: #fff;
}

/* status bar */
.status {
    height: 17px;
    display: flex;
    align-items: center;
    padding: 0 6px 0 5px;
    border-left: 2px solid #6fa3dc;
    border-bottom: 2px solid #2a4a6b;
    background: #f1f5f8;
}

.mini-logo {
    width: 12px;
    height: 12px;
    display: flex;
    align-items: center;
    justify-content: center;
    background: #1273dc;
}

.mini-logo svg {
    width: 10px;
    height: 5px;
    stroke: #fff;
}

.edition {
    width: 77px;
    padding-left: 5px;
    white-space: nowrap;
    color: #555;
}

.gray {
    height: 12px;
    background: #d9dcdf;
}

.commands {
    width: 58px;
    margin-right: 7px;
}

.command {
    width: 174px;
    height: 12px;
    padding: 0 1px;
    background: #f0f1f1;
    font-size: 7px;
}

.ok {
    width: 50px;
    margin-right: auto;
}

.find {
    width: 82px;
    height: 12px;
    padding: 0 2px;
    background: #ecedee;
    font-size: 7px;
}

.command::placeholder,
.find::placeholder {
    color: #8c8c8c;
}

.find-btn {
    width: 18px;
}

.find-btn svg {
    width: 9px;
    height: 9px;
}

.toggles {
    display: flex;
    gap: 4px;
    padding-left: 5px;
}

.toggles button {
    width: 15px;
    height: 14px;
}

.toggles .on {
    background: #cfe3f7;
}

.dark svg {
    stroke: #222;
}

/* watermark over the lower right corner */
.watermark {
    position: absolute;
    right: 6px;
    bottom: 3px;
    display: flex;
    align-items: flex-start;
    gap: 4px;
    pointer-events: none;
}

.wm-box {
    width: 45px;
    height: 36px;
    border: 4px solid #56585a;
    border-radius: 4px;
    display: flex;
    flex-direction: column;
    justify-content: space-between;
    color: #56585a;
}

.wm-box span {
    padding-left: 3px;
    font: bold 17px/18px "Liberation Sans", sans-serif;
}

.wm-box svg {
    width: 100%;
    height: 12px;
    fill: #56585a;
    stroke: none;
}

.wm-name {
    padding-top: 8px;
    font-size: 15px;
    line-height: 18px;
    font-weight: bold;
    color: #606366;
}

.wm-win {
    font-family: "Liberation Sans", Arial, sans-serif;
    font-size: 11px;
    line-height: 17px;
    color: #a9adb2a0;
}
```
